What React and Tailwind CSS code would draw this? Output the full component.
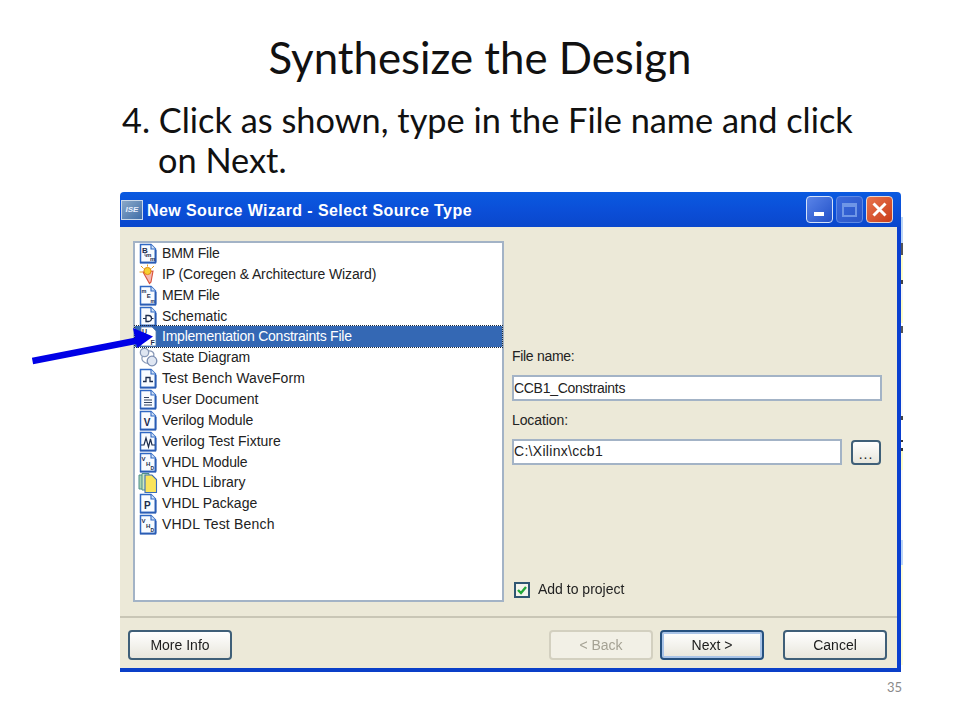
import React from "react";

const ui = "font-['Liberation_Sans',sans-serif]";

function Page({ children }) {
  return (
    <svg width="20" height="21" viewBox="0 0 20 21" className="shrink-0">
      <path d="M2.5 1.5H13L17.5 6V19.5H2.5Z" fill="#f8fbff" stroke="#2f68c4" strokeWidth="1.5" />
      <path d="M13 1.5V6H17.5" fill="#cfe0f5" stroke="#2f68c4" strokeWidth="1.1" />
      <path d="M2 19.6H18M17.6 7V19.6" stroke="#2a5cb4" strokeWidth="1.8" />
      {children}
    </svg>
  );
}

const Letter = ({ x, y, c, s = 7, f = "#1c2c4c" }) => (
  <text x={x} y={y} fontSize={s} fontWeight="700" fill={f} fontFamily="Liberation Sans, sans-serif">
    {c}
  </text>
);

function Icon({ type }) {
  switch (type) {
    case "bmm":
      return (
        <Page>
          <Letter x="4" y="9.5" c="B" s={8} />
          <path d="M7 10V13H9" fill="none" stroke="#3c4c6c" strokeWidth="0.7" />
          <Letter x="8" y="13.5" c="m" s={6} />
          <Letter x="12" y="18" c="m" s={6} />
        </Page>
      );
    case "mem":
      return (
        <Page>
          <Letter x="3.6" y="7.5" c="m" s={5.5} />
          <Letter x="8.8" y="13" c="E" s={6} />
          <Letter x="12.6" y="18" c="m" s={5} />
        </Page>
      );
    case "ip":
      return (
        <svg width="20" height="21" viewBox="0 0 20 21" className="shrink-0">
          <path d="M5 8 L15 7 L13 18 L11.5 19.5 Z" fill="#f4b8b0" stroke="#d8503c" strokeWidth="1.1" />
          <circle cx="9.5" cy="7" r="3.6" fill="#f7d030" stroke="#e08a10" strokeWidth="1" />
          <path d="M3 2 L5.5 4.5 M9.5 0.5 V2.5 M16 2 L13.5 4.5 M1.5 8 H4.5" stroke="#e6a020" strokeWidth="1" />
        </svg>
      );
    case "sch":
      return (
        <Page>
          <path d="M8 9.5H10.5A3 3 0 0 1 10.5 15.5H8Z" fill="#fff" stroke="#1c2c4c" strokeWidth="1.3" />
          <path d="M5 12.5H8M13.5 12.5H15.5" stroke="#1c2c4c" strokeWidth="1.2" />
        </Page>
      );
    case "impl":
      return (
        <svg width="20" height="21" viewBox="0 0 20 21" className="shrink-0">
          <path d="M3 1H14L18 5V20H3Z" fill="#fff" stroke="#5878a8" strokeWidth="0.8" />
          <Letter x="4" y="8" c="U" s={7} />
          <Letter x="12.5" y="18.5" c="F" s={7} />
        </svg>
      );
    case "state":
      return (
        <svg width="20" height="21" viewBox="0 0 20 21" className="shrink-0">
          <path d="M4.5 9 C2.5 13 6 16 10 16.5 M9 4 C14 3 17 6 15.5 9.5" fill="none" stroke="#8a9ab8" strokeWidth="1.2" />
          <circle cx="6.5" cy="5.5" r="4.2" fill="#dfe6f2" stroke="#8a9ab8" strokeWidth="1.3" />
          <circle cx="14" cy="14" r="4.8" fill="#dfe6f2" stroke="#7d8fb2" strokeWidth="1.3" />
        </svg>
      );
    case "wave":
      return (
        <Page>
          <path d="M5 13.5H8V9.5H12V13.5H15" fill="none" stroke="#1c2c4c" strokeWidth="1.3" />
        </Page>
      );
    case "doc":
      return (
        <Page>
          <path d="M6 8.5H11M6 11H14M6 13.5H14M6 16H14" stroke="#33435f" strokeWidth="1.1" />
        </Page>
      );
    case "v":
      return (
        <Page>
          <Letter x="5.8" y="15.5" c="V" s={10} />
        </Page>
      );
    case "fixture":
      return (
        <Page>
          <path d="M3 14H6L8 7L10.5 16L12.5 8L14 14H17" fill="none" stroke="#1c2c4c" strokeWidth="1.2" />
        </Page>
      );
    case "vhdl":
      return (
        <Page>
          <Letter x="3.6" y="8.5" c="V" s={6} />
          <Letter x="8" y="13.5" c="H" s={6} />
          <Letter x="12.6" y="18.2" c="D" s={5} />
        </Page>
      );
    case "lib":
      return (
        <svg width="20" height="21" viewBox="0 0 20 21" className="shrink-0">
          <path d="M1 3H9V17H1Z" fill="#a8d4b0" stroke="#4f8f8a" />
          <path d="M4 1.5H11V18H4Z" fill="#cfe8c0" stroke="#4f8f8a" />
          <path d="M7 3H14L18.5 7.5V20.5H7Z" fill="#f9e45c" stroke="#3a6cb8" strokeWidth="1.1" />
        </svg>
      );
    case "pkg":
      return (
        <Page>
          <Letter x="6" y="15.5" c="P" s={10} />
        </Page>
      );
    default:
      return null;
  }
}

const items = [
  { type: "bmm", label: "BMM File", fit: "tracking-[-0.2px]" },
  { type: "ip", label: "IP (Coregen & Architecture Wizard)", fit: "tracking-[-0.12px]" },
  { type: "mem", label: "MEM File", fit: "tracking-[-0.2px]" },
  { type: "sch", label: "Schematic", fit: "" },
  { type: "impl", label: "Implementation Constraints File", fit: "tracking-[-0.23px]", selected: true },
  { type: "state", label: "State Diagram", fit: "tracking-[-0.1px]" },
  { type: "wave", label: "Test Bench WaveForm", fit: "tracking-[0.1px]" },
  { type: "doc", label: "User Document", fit: "tracking-[-0.08px]" },
  { type: "v", label: "Verilog Module", fit: "tracking-[-0.1px]" },
  { type: "fixture", label: "Verilog Test Fixture", fit: "" },
  { type: "vhdl", label: "VHDL Module", fit: "tracking-[-0.1px]" },
  { type: "lib", label: "VHDL Library", fit: "" },
  { type: "pkg", label: "VHDL Package", fit: "" },
  { type: "vhdl", label: "VHDL Test Bench", fit: "tracking-[0.2px]" },
];

function XpButton({ children, disabled, focus }) {
  const base = "w-[104px] h-[30px] rounded-[4px] text-[14px] flex items-center justify-center ";
  const look = disabled
    ? "border-2 border-[#d3d0c0] bg-[#f2f0e6] text-[#a5a294]"
    : focus
      ? "border-2 border-[#25507f] bg-gradient-to-b from-[#ffffff] to-[#e8e6dc] text-[#1c1c1c] shadow-[inset_0_0_0_2px_#a9c4e8]"
      : "border-2 border-[#3f5f78] bg-gradient-to-b from-[#ffffff] to-[#e8e6dc] text-[#1c1c1c]";
  return <div className={base + look}>{children}</div>;
}

const strip = [
  ["h-[25px]", "bg-white"],
  ["h-[26px]", "bg-[#bcd6f6]"],
  ["h-[12px]", "bg-[#555555]"],
  ["h-[25px]", "bg-[#fdfdc8]"],
  ["h-[4px]", "bg-[#444444]"],
  ["h-[16px]", "bg-[#f4f4f4]"],
  ["h-[23px]", "bg-[#fdfdc8]"],
  ["h-[3px]", "bg-white"],
  ["h-[7px]", "bg-[#555555]"],
  ["h-[83px]", "bg-[#f8f8f8]"],
  ["h-[4px]", "bg-[#444444]"],
  ["h-[20px]", "bg-white"],
  ["h-[2px]", "bg-[#333333]"],
  ["h-[6px]", "bg-white"],
  ["h-[3px]", "bg-[#333333]"],
  ["h-[19px]", "bg-[#fdfdc8]"],
  ["h-[70px]", "bg-[#f8f8f8]"],
  ["h-[25px]", "bg-[#bcd6f6]"],
  ["h-[100px]", "bg-[#fdfdd8]"],
  ["h-[7px]", "bg-white"],
];

export default function App() {
  return (
    <div className="relative w-[960px] h-[720px] bg-white overflow-hidden font-['Lato',sans-serif] text-black">
      <h1 className="h-[38px] mt-[38px] text-center text-[43.8px] leading-[38px] font-normal text-[#111]">
        Synthesize the Design
      </h1>
      <div className="mt-[24px] ml-[122px] text-[34.35px] leading-[40px] text-[#111]">
        <div>4. Click as shown, type in the File name and click</div>
        <div className="ml-[36px]">on Next.</div>
      </div>

      <div className={`mt-[12px] ml-[120px] w-[783px] h-[480px] flex ${ui} text-[#222] blur-[0.3px]`}>
        <div className="w-[781px] flex flex-col">
          <div className="h-[35px] flex items-center pl-[1px] pr-[8px] rounded-t-[4px] bg-gradient-to-b from-[#0a5ae0] via-[#0b4fd8] to-[#0a47cc]">
            <div className="w-[22px] h-[20px] mr-[4px] bg-gradient-to-br from-[#8aa8c8] to-[#3e6ea8] border border-[#c8d8ea] flex items-center justify-center text-[8px] italic font-bold text-[#e8f0ff]">
              ISE
            </div>
            <span className="pt-[2px] text-white font-bold text-[16px] tracking-[0.42px] whitespace-nowrap">
              New Source Wizard - Select Source Type
            </span>
            <div className="ml-auto flex gap-[3px]">
              <div className="w-[27px] h-[27px] rounded-[4px] border border-[#d5e2f8] bg-gradient-to-br from-[#5a84e8] to-[#2250c8] flex items-end pl-[7px] pb-[6px]">
                <div className="w-[10px] h-[4px] bg-white" />
              </div>
              <div className="w-[27px] h-[27px] rounded-[4px] border border-[#5f8ae4] bg-gradient-to-br from-[#3c6adc] to-[#2a56c8] flex items-center justify-center">
                <div className="w-[15px] h-[14px] border-2 border-t-4 border-[#6f96e6]" />
              </div>
              <div className="w-[27px] h-[27px] rounded-[4px] border border-[#e8d8d0] bg-gradient-to-br from-[#e8734c] to-[#c93c18] flex items-center justify-center">
                <svg width="17" height="17" viewBox="0 0 17 17">
                  <path d="M2.5 2.5L14.5 14.5M14.5 2.5L2.5 14.5" stroke="#fff" strokeWidth="3" />
                </svg>
              </div>
            </div>
          </div>

          <div className="flex-1 flex min-h-0">
            <div className="flex-1 bg-[#ece9d8] flex flex-col min-w-0">
              <div className="h-[389px] flex pt-[14px] pl-[13px] pr-[15px]">
                <div className="w-[371px] h-[361px] bg-white border-2 border-[#a3b3c6]">
                  {items.map(({ type, label, fit, selected }) => (
                    <div
                      key={label}
                      className={
                        "h-[20.86px] flex items-center pl-[3px] text-[14px] whitespace-nowrap " +
                        (selected
                          ? "bg-[#3468b4] text-white outline-1 outline-dotted outline-[#1d2a3c]"
                          : "")
                      }
                    >
                      <Icon type={type} />
                      <span className={"ml-[4px] " + fit}>{label}</span>
                    </div>
                  ))}
                </div>
                <div className="ml-[8px] flex-1 flex flex-col pt-[107px]">
                  <div className="text-[14px] leading-[16px] h-[27px] tracking-[-0.3px]">File name:</div>
                  <div className="h-[26px] w-[370px] bg-white border-2 border-[#a3b3c6] flex items-center text-[14px] tracking-[-0.3px]">
                    CCB1_Constraints
                  </div>
                  <div className="mt-[11px] text-[14px] leading-[16px] h-[26px] tracking-[-0.1px]">Location:</div>
                  <div className="flex items-center">
                    <div className="h-[26px] w-[330px] bg-white border-2 border-[#a3b3c6] flex items-center text-[14px] tracking-[0.3px]">
                      C:\Xilinx\ccb1
                    </div>
                    <div className="ml-[9px] mt-[2px] w-[30px] h-[25px] rounded-[4px] border-2 border-[#3f5f78] bg-gradient-to-b from-[#ffffff] to-[#e8e6dc] flex items-end justify-center text-[14px] leading-[17px] tracking-[1px]">
                      ...
                    </div>
                  </div>
                  <div className="mt-[114px] flex items-center ml-[2px]">
                    <div className="w-[16px] h-[16px] border-2 border-[#2f5672] bg-[#f4f4ec] flex items-center justify-center">
                      <svg width="12" height="12" viewBox="0 0 12 12">
                        <path d="M2 6L5 9L10 3" fill="none" stroke="#22a838" strokeWidth="2.4" />
                      </svg>
                    </div>
                    <span className="ml-[8px] text-[14px]">Add to project</span>
                  </div>
                </div>
              </div>
              <div className="h-[2px] bg-[#c9c6b6]" />
              <div className="flex-1 flex items-start pt-[12px] pl-[8px] pr-[10px]">
                <XpButton>More Info</XpButton>
                <div className="ml-auto flex">
                  <XpButton disabled>&lt; Back</XpButton>
                  <div className="ml-[7px]">
                    <XpButton focus>Next &gt;</XpButton>
                  </div>
                  <div className="ml-[19px]">
                    <XpButton>Cancel</XpButton>
                  </div>
                </div>
              </div>
            </div>
            <div className="w-[4px] bg-[#0a3fd0]" />
          </div>
          <div className="h-[4px] bg-[#0a3fc8]" />
        </div>
        <div className="w-[2px] flex flex-col">
          {strip.map(([h, c], i) => (
            <div key={i} className={`${h} ${c}`} />
          ))}
        </div>
      </div>

      <div className="absolute left-[887px] top-[679px] text-[13px] leading-[16px] text-[#8a8a8a]">35</div>

      <svg width="140" height="50" viewBox="0 0 140 50" className="absolute left-[25px] top-[320px]">
        <path d="M7.5 41L115 20" stroke="#0000e6" strokeWidth="6.5" />
        <path d="M128 16.5L108 8L112 28Z" fill="#0000e6" />
      </svg>
    </div>
  );
}
